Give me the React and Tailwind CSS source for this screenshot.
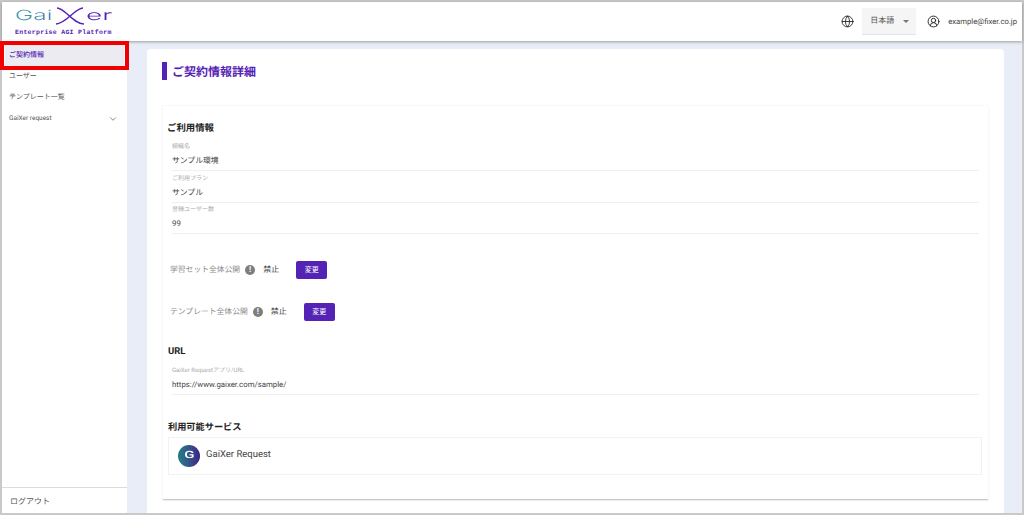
// App.jsx
import { ChevronDown, Globe, CircleUserRound } from 'lucide-react';

const FONT = "font-['Roboto','Noto_Sans_CJK_JP',sans-serif] [text-rendering:geometricPrecision]";

const menuItems = ['ユーザー', 'テンプレート一覧'];

function Field({ label, value, className = '' }) {
  return (
    <div className={`ml-[5px] mr-[9px] border-b border-[#efefef] ${className}`}>
      <div className="pt-[1px] text-[6px] leading-[9px] text-[#ababab]">{label}</div>
      <div className="mt-[3px] pb-[3px] text-[7.8px] leading-[13px] text-[#444]">{value}</div>
    </div>
  );
}

function PublicRow({ label, className = '' }) {
  return (
    <div className={`flex items-center pl-[3px] ${className}`}>
      <span className="text-[7.8px] text-[#8a8a8a]">{label}</span>
      <span className="ml-[5px] flex h-[10px] w-[10px] items-center justify-center rounded-full bg-[#7d7d7d] text-[8px] font-bold leading-none text-white">!</span>
      <span className="ml-[8px] text-[8px] text-[#444]">禁止</span>
      <button type="button" className="ml-[17px] h-[18px] w-[31px] rounded-[2px] bg-[#5423b5] text-[7px] text-white">変更</button>
    </div>
  );
}

function Logo() {
  return (
    <div className="flex w-[98px] flex-col">
      <div className="flex h-[19px] items-center font-['Inter',sans-serif] text-[14px] font-light leading-none">
        <span className="inline-block w-[39px] origin-left scale-x-[1.75] bg-gradient-to-r from-[#3d9ca8] to-[#5b6fb5] bg-clip-text text-transparent">Gai</span>
        <svg width="32" height="18" viewBox="0 0 32 18" fill="none">
          <path d="M3 1 C11 1 19 17 30 17" stroke="#5423b5" strokeWidth="1.4" />
          <path d="M29 1 C21 1 12 17 2 17" stroke="#5423b5" strokeWidth="1.4" />
        </svg>
        <span className="inline-block origin-left scale-x-[2] text-[#5423b5]">er</span>
      </div>
      <div className="mt-[3px] whitespace-nowrap font-['Liberation_Mono',monospace] text-[6.5px] font-bold leading-[9px] tracking-[0.3px] text-[#5423b5]">
        Enterprise AGI Platform
      </div>
    </div>
  );
}

export default function App() {
  return (
    <div className={`${FONT} relative flex h-[515px] w-[1024px] flex-col border-2 border-[#c9c9c9] bg-white`}>
      {/* Header */}
      <header className="relative z-10 flex h-[39px] shrink-0 items-center justify-between bg-white pl-[13px] pr-[5px] shadow-[0_1px_3px_rgba(0,0,0,0.35)]">
        <Logo />
        <div className="flex items-center">
          <Globe size={13} strokeWidth={1.6} className="text-[#222]" />
          <div className="ml-[8px] flex h-[27px] w-[54px] items-center border-b border-[#e4e4e4] bg-[#f5f5f5] pl-[8px] text-[8px] text-[#555]">
            日本語
            <span className="ml-[9px] h-0 w-0 border-x-[3px] border-t-[3px] border-x-transparent border-t-[#777]" />
          </div>
          <CircleUserRound size={13} strokeWidth={1.7} className="ml-[11px] text-[#222]" />
          <span className="ml-[8px] text-[7.7px] text-[#444]">example@fixer.co.jp</span>
        </div>
      </header>

      <div className="flex min-h-0 flex-1 overflow-hidden">
        {/* Sidebar */}
        <aside className="flex w-[125px] shrink-0 flex-col justify-between bg-white">
          <nav className="pt-[3px] text-[7px] leading-[21px] text-[#555]">
            <div className="mx-[3px] rounded-[2px] bg-[#ebebf1] pl-[4px] pt-[1px] font-medium text-[#5423b5]">ご契約情報</div>
            {menuItems.map((item) => (
              <div key={item} className="pl-[7px]">{item}</div>
            ))}
            <div className="flex items-center justify-between pl-[7px] pr-[9px] text-[6.5px]">
              GaiXer request
              <ChevronDown size={10} strokeWidth={1.5} className="text-[#444]" />
            </div>
          </nav>
          <div className="h-[26px] border-t border-[#dcdcdc] pl-[8px] pt-[7px] text-[8px] leading-[13px] text-[#555]">ログアウト</div>
        </aside>

        {/* Main */}
        <main className="min-w-0 flex-1 bg-[#e8edf7] pl-[20px] pr-[18px] pt-[8px]">
          <div className="h-[520px] rounded-[4px] bg-white px-[15px] pt-[13px]">
            <div className="flex h-[18px] items-center border-l-[5px] border-[#5423b5] pl-[5px] pt-[1px] text-[12px] font-bold text-[#5423b5]">
              ご契約情報詳細
            </div>

            {/* Detail card */}
            <section className="mt-[25px] h-[395px] rounded-[2px] border border-[#f8f8f8] border-b-[#c9c9c9] pl-[4px] pt-[16px] shadow-[0_1px_1px_rgba(0,0,0,0.08)]">
              <h2 className="text-[9.4px] font-bold leading-[14px] text-[#222]">ご利用情報</h2>
              <Field label="組織名" value="サンプル環境" className="mt-[5px]" />
              <Field label="ご利用プラン" value="サンプル" className="mt-[1.5px]" />
              <Field label="登録ユーザー数" value="99" className="mt-[1.5px]" />

              <PublicRow label="学習セット全体公開" className="mt-[27px]" />
              <PublicRow label="テンプレート全体公開" className="mt-[24px]" />

              <h2 className="mt-[24px] pl-[1px] text-[9.5px] font-bold leading-[14px] text-[#222]">URL</h2>
              <Field label="GaiXer Requestアプリ/URL" value="https://www.gaixer.com/sample/" className="mt-[5.5px]" />

              <h2 className="mt-[26px] pl-[1px] text-[9.2px] font-bold leading-[14px] text-[#222]">利用可能サービス</h2>
              <div className="ml-[1px] mr-[6px] mt-[2px] flex h-[38px] items-center border border-[#f2f2f2] pl-[9px]">
                <span className="flex h-[22px] w-[22px] items-center justify-center rounded-full bg-gradient-to-r from-[#1d7f87] to-[#3a2188]">
                  <span className="inline-block scale-x-[1.5] text-[10px] font-medium leading-none text-white">G</span>
                </span>
                <span className="ml-[6px] text-[9.5px] text-[#444]">GaiXer Request</span>
              </div>
            </section>
          </div>
        </main>
      </div>

      {/* Red highlight annotation */}
      <div className="absolute left-[-2px] top-[39px] z-20 h-[29px] w-[129px] border-4 border-[#f00000]" />
    </div>
  );
}
